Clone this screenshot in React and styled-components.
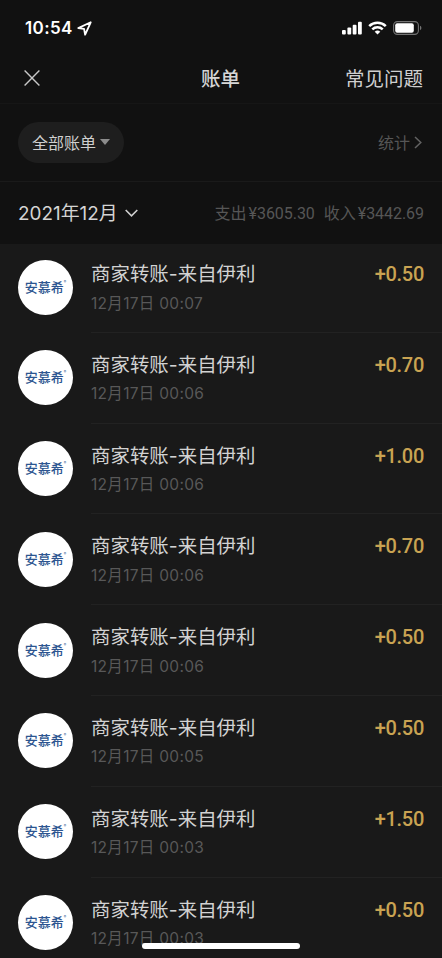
import React from 'react';
import styled, { createGlobalStyle } from 'styled-components';

const bills = [
    { id: 1, time: '12月17日 00:07', amount: '+0.50' },
    { id: 2, time: '12月17日 00:06', amount: '+0.70' },
    { id: 3, time: '12月17日 00:06', amount: '+1.00' },
    { id: 4, time: '12月17日 00:06', amount: '+0.70' },
    { id: 5, time: '12月17日 00:06', amount: '+0.50' },
    { id: 6, time: '12月17日 00:05', amount: '+0.50' },
    { id: 7, time: '12月17日 00:03', amount: '+1.50' },
    { id: 8, time: '12月17日 00:03', amount: '+0.50' },
];

const App = () => {
    return (
        <>
            <GlobalStyle />
            <Screen>
                <StatusBar />
                <NavBar>
                    <CloseIcon viewBox="0 0 16 16">
                        <path d="M0.6 0.6 L15.4 15.4 M15.4 0.6 L0.6 15.4" />
                    </CloseIcon>
                    <h1>账单</h1>
                    <HelpLink>常见问题</HelpLink>
                </NavBar>
                <FilterBar>
                    <FilterPill>
                        全部账单
                        <Caret />
                    </FilterPill>
                    <StatsLink>
                        <span>统计</span>
                        <svg width="8" height="13" viewBox="0 0 8 13">
                            <path d="M1 1 L6.8 6.5 L1 12" />
                        </svg>
                    </StatsLink>
                </FilterBar>
                <MonthBar>
                    <Month>
                        <span>2021年12月</span>
                        <svg width="13" height="8" viewBox="0 0 13 8">
                            <path d="M0.7 1 L6.5 6.8 L12.3 1" />
                        </svg>
                    </Month>
                    <Totals>
                        <Total label="支出" value="¥3605.30" />
                        <Total label="收入" value="¥3442.69" />
                    </Totals>
                </MonthBar>
                <BillList>
                    {bills.map((bill) => (
                        <Bill key={bill.id} time={bill.time} amount={bill.amount} />
                    ))}
                </BillList>
                <HomeIndicator />
            </Screen>
        </>
    );
};

const GlobalStyle = createGlobalStyle`
  * {
    box-sizing: border-box;
  }
  body {
    margin: 0;
    background: #111111;
    font-family: Inter, "Noto Sans CJK SC", sans-serif;
  }
`;

const Screen = styled.div`
  position: relative;
  width: 442px;
  height: 958px;
  overflow: hidden;
  background: #111111;
  color: #cfcfcf;
  white-space: nowrap;
`;

const StatusRow = styled.div`
  height: 54px;
  padding: 2px 20px 0 25px;
  display: flex;
  align-items: center;
  justify-content: space-between;
  color: #ffffff;
`;

const Clock = styled.div`
  display: flex;
  align-items: center;
  gap: 4px;
  font-size: 17px;
  font-weight: 600;
  letter-spacing: 0.4px;
`;

const Signals = styled.div`
  display: flex;
  align-items: center;
  gap: 6px;
`;

const NavBar = styled.div`
  height: 50px;
  padding: 0 19px 0 24px;
  display: grid;
  grid-template-columns: 1fr auto 1fr;
  align-items: center;
  border-bottom: 1px solid #161616;
  h1 {
    margin: 1px 6px 0 0;
    font-size: 19.5px;
    font-weight: 500;
    line-height: 28px;
    color: #d6d6d6;
  }
`;

const CloseIcon = styled.svg`
  width: 16px;
  height: 16px;
  margin-top: -2px;
  fill: none;
  stroke: #c8c8c8;
  stroke-width: 1.4;
`;

const HelpLink = styled.span`
  justify-self: end;
  margin-top: 1px;
  font-size: 19.5px;
  line-height: 28px;
`;

const FilterBar = styled.div`
  height: 78px;
  padding: 0 20px 0 18px;
  display: flex;
  align-items: center;
  justify-content: space-between;
  border-bottom: 1px solid #1a1a1a;
`;

const FilterPill = styled.div`
  width: 106px;
  height: 41px;
  padding: 0 0 2px 14px;
  display: flex;
  align-items: center;
  gap: 4px;
  border-radius: 21px;
  background: #1e1e1e;
  font-size: 16px;
`;

const Caret = styled.i`
  margin-top: 1px;
  border: 5px solid transparent;
  border-top: 6px solid #8c8c8c;
  border-bottom: 0;
`;

const StatsLink = styled.div`
  padding-bottom: 2px;
  display: flex;
  align-items: center;
  gap: 4px;
  font-size: 16px;
  color: #565656;
  svg {
    margin-top: 1px;
    fill: none;
    stroke: #626262;
    stroke-width: 1.5;
  }
`;

const MonthBar = styled.div`
  height: 62px;
  padding: 0 18px 3px 18px;
  display: flex;
  align-items: center;
  justify-content: space-between;
`;

const Month = styled.div`
  display: flex;
  align-items: center;
  gap: 7px;
  font-size: 18.9px;
  color: #d4d4d4;
  svg {
    margin-top: 2px;
    fill: none;
    stroke: #d0d0d0;
    stroke-width: 1.6;
  }
`;

const Totals = styled.div`
  display: flex;
  gap: 9px;
`;

const TotalItem = styled.span`
  font-family: Roboto, "Noto Sans CJK SC", sans-serif;
  font-size: 16px;
  color: #565656;
  b {
    margin-left: 2px;
    font-weight: 400;
    font-size: 16px;
    letter-spacing: -0.05px;
  }
`;

const BillList = styled.div`
  height: 714px;
  overflow: hidden;
  background: #191919;
`;

const BillRow = styled.div`
  height: 90.8px;
  padding-left: 18px;
  display: flex;
  gap: 18px;
  &:first-child {
    height: 88.8px;
  }
  &:first-child > * {
    margin-top: -2px;
  }
`;

const Avatar = styled.div`
  flex: none;
  margin-top: 17.5px;
  width: 55px;
  height: 55px;
  display: flex;
  align-items: center;
  justify-content: center;
  border-radius: 50%;
  background: #ffffff;
  color: #2c5590;
  font-family: "Noto Sans CJK SC", sans-serif;
  font-size: 13px;
  font-weight: 500;
  ${BillRow}:first-child > && {
    margin-top: 15.5px;
  }
  span {
    margin: -2px 0 0 0;
  }
  sup {
    align-self: flex-start;
    margin-top: 19px;
    font-size: 5px;
    line-height: 6px;
    font-weight: 400;
  }
`;

const BillBody = styled.div`
  flex: 1;
  padding: 18px 18px 0 0;
  display: flex;
  justify-content: space-between;
  border-bottom: 1px solid #222222;
`;

const Title = styled.div`
  font-size: 19.4px;
  line-height: 28px;
  letter-spacing: 0.05px;
  color: #d2d2d2;
`;

const Time = styled.div`
  margin-top: 3.5px;
  font-size: 15.5px;
  line-height: 24px;
  letter-spacing: 0.3px;
  color: #585858;
`;

const Amount = styled.div`
  font-family: Roboto, sans-serif;
  font-size: 20px;
  font-weight: 500;
  line-height: 28px;
  letter-spacing: -0.3px;
  color: #c9a352;
`;

const HomeIndicator = styled.div`
  position: absolute;
  left: 142px;
  bottom: 9px;
  width: 158px;
  height: 6px;
  border-radius: 3px;
  background: #ffffff;
`;

// STATUS BAR

const StatusBar = () => {
    return (
        <StatusRow>
            <Clock>
                10:54
                <svg width="15" height="15" viewBox="0 0 14 14">
                    <path
                        d="M12.8 1.2 L1.2 6.6 L6.6 7.4 L7.6 12.8 Z"
                        fill="none"
                        stroke="#ffffff"
                        strokeWidth="1.7"
                        strokeLinejoin="round"
                    />
                </svg>
            </Clock>
            <Signals>
                <svg width="20" height="14" viewBox="0 0 20 14" fill="#ffffff">
                    <rect x="0" y="9" width="3.8" height="4.6" rx="1" />
                    <rect x="5.4" y="6.6" width="3.8" height="7" rx="1" />
                    <rect x="10.7" y="3.8" width="3.8" height="9.8" rx="1" />
                    <rect x="16" y="0.8" width="3.8" height="12.8" rx="1" />
                </svg>
                <svg width="19" height="14" viewBox="0 0 19 14" fill="none" stroke="#ffffff" strokeWidth="2.5">
                    <path d="M1.2 5.1 A11.8 11.8 0 0 1 17.8 5.1" />
                    <path d="M4.3 8.3 A7.4 7.4 0 0 1 14.7 8.3" />
                    <path d="M6.7 10.8 A4 4 0 0 1 12.3 10.8 L9.5 13.6 Z" fill="#ffffff" stroke="none" />
                </svg>
                <svg width="29" height="14" viewBox="0 0 29 14">
                    <rect x="0.6" y="0.6" width="24.8" height="12.8" rx="3.8" fill="none" stroke="#747474" strokeWidth="1.1" />
                    <rect x="2.2" y="2.2" width="18.6" height="9.6" rx="2" fill="#ffffff" />
                    <path d="M27 4.8 A2.4 2.4 0 0 1 27 9.2 Z" fill="#747474" />
                </svg>
            </Signals>
        </StatusRow>
    );
};

// MONTH TOTAL

const Total = ({ label, value }) => {
    return (
        <TotalItem>
            {label}
            <b>{value}</b>
        </TotalItem>
    );
};

// BILL ROW

const Bill = ({ time, amount }) => {
    return (
        <BillRow>
            <Avatar>
                <span>安慕希</span>
                <sup>®</sup>
            </Avatar>
            <BillBody>
                <div>
                    <Title>商家转账-来自伊利</Title>
                    <Time>{time}</Time>
                </div>
                <Amount>{amount}</Amount>
            </BillBody>
        </BillRow>
    );
};

export default App;
